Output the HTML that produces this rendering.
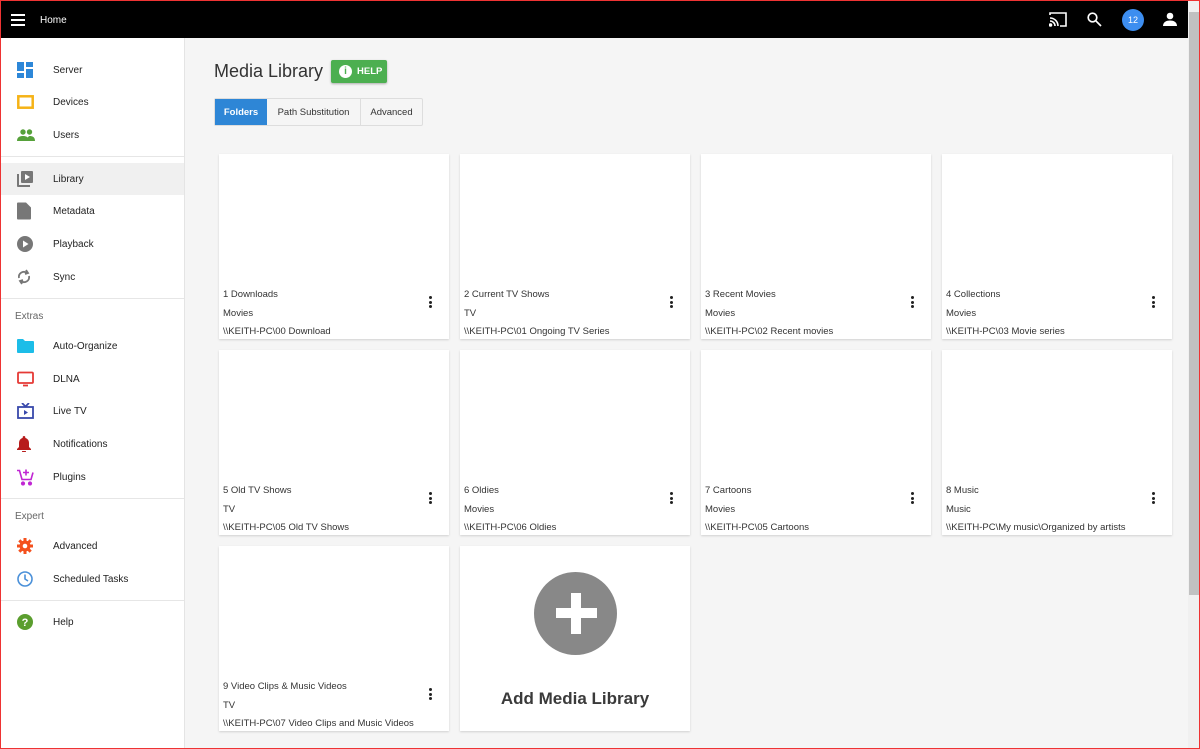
<!DOCTYPE html>
<html><head><meta charset="utf-8"><style>
*{box-sizing:border-box;margin:0;padding:0}
body{width:1200px;height:749px;overflow:hidden;font-family:"Liberation Sans",sans-serif;background:#f5f5f5;position:relative}
.frame{position:absolute;inset:0;border:1px solid #e33;pointer-events:none;z-index:10}
.top{position:absolute;left:0;top:0;width:1188px;height:38px;background:#000;color:#fff}
.side{position:absolute;left:0;top:38px;width:185px;height:711px;background:#fff;border-right:1px solid #e4e4e4}
.it{position:absolute;left:0;width:184px;height:32px;font-size:10px;color:#222;}
.it span{position:absolute;left:53px;top:50%;transform:translateY(-45%)}
.it svg{position:absolute;left:17px;top:50%;transform:translateY(-50%)}
.hd{position:absolute;left:15px;font-size:10px;color:#666}
.dv{position:absolute;left:0;width:184px;border-top:1px solid #e6e6e6}
.card{position:absolute;width:230px;height:185px;background:#fff;box-shadow:0 1px 2px rgba(0,0,0,.15)}
.card p{position:absolute;left:4px;font-size:9.5px;color:#333;white-space:nowrap}
.dots{position:absolute;left:210px;top:142px;width:4px}
.dots i{display:block;width:3px;height:3px;border-radius:50%;background:#222;margin-bottom:1.5px}
.sb{position:absolute;left:1188px;top:0;width:12px;height:749px;background:#f0f0f0}
</style></head><body>
<div class="top">
<div style="position:absolute;left:11px;top:14px;width:14px"><div style="height:2px;background:#fff;margin-bottom:3px"></div><div style="height:2px;background:#fff;margin-bottom:3px"></div><div style="height:2px;background:#fff"></div></div>
<div style="position:absolute;left:40px;top:15px;font-size:10px">Home</div>
<svg style="position:absolute;left:1049px;top:12px" width="18" height="15" viewBox="0 0 18 15" fill="none" stroke="#fff" stroke-width="1.6"><path d="M1 3V1h16v13h-6"/><path d="M1 6a8 8 0 0 1 8 8M1 9a5 5 0 0 1 5 5"/><circle cx="1.5" cy="13" r="1" fill="#fff"/></svg>
<svg style="position:absolute;left:1087px;top:12px" width="15" height="15" viewBox="0 0 15 15" fill="none" stroke="#fff" stroke-width="1.7"><circle cx="5.5" cy="5.5" r="4.3"/><path d="M8.7 8.7L14 14"/></svg>
<div style="position:absolute;left:1122px;top:9px;width:22px;height:22px;border-radius:50%;background:#3d8ef0;font-size:9px;text-align:center;line-height:22px">12</div>
<svg style="position:absolute;left:1163px;top:12px" width="14" height="14" viewBox="0 0 14 14" fill="#fff"><circle cx="7" cy="4" r="3.3"/><path d="M0 14c0-4 3.5-5.5 7-5.5s7 1.5 7 5.5z"/></svg>
</div>
<div class="side">
<div class="it" style="top:16px"><svg width="16" height="16" viewBox="0 0 16 16" fill="#2d87d8"><rect x="0" y="0" width="7" height="9"/><rect x="9" y="0" width="7" height="5"/><rect x="0" y="11" width="7" height="5"/><rect x="9" y="7" width="7" height="9"/></svg><span>Server</span></div>
<div class="it" style="top:48px"><svg width="17" height="14" viewBox="0 0 17 14" fill="none" stroke="#f5b317" stroke-width="2.5"><rect x="1.3" y="1.3" width="14.4" height="11.4"/></svg><span>Devices</span></div>
<div class="it" style="top:81px"><svg width="18" height="12" viewBox="0 0 18 12" fill="#56a13a"><circle cx="6" cy="3" r="2.7"/><circle cx="12.5" cy="3" r="2.7"/><path d="M0 12c0-4 3-5 6-5s6 1 6 5zM10 12c0-3 1-4.5 2.5-5 3 0 5.5 1 5.5 5z"/></svg><span>Users</span></div>
<div class="dv" style="top:118px"></div>
<div class="it" style="top:125px;background:#f0f0f0"><svg width="16" height="16" viewBox="0 0 16 16" fill="#777"><path d="M0 3h2v11h11v2H1a1 1 0 0 1-1-1z"/><rect x="4" y="0" width="12" height="12" rx="1"/><path d="M8 3v6l5-3z" fill="#fff"/></svg><span>Library</span></div>
<div class="it" style="top:157px"><svg width="14" height="17" viewBox="0 0 14 17" fill="#777"><path d="M1 0h8l5 5v11a1 1 0 0 1-1 1H1a1 1 0 0 1-1-1V1a1 1 0 0 1 1-1z"/></svg><span>Metadata</span></div>
<div class="it" style="top:190px"><svg width="16" height="16" viewBox="0 0 16 16"><circle cx="8" cy="8" r="8" fill="#777"/><path d="M6 4.5v7l5.5-3.5z" fill="#fff"/></svg><span>Playback</span></div>
<div class="it" style="top:223px"><svg width="14" height="16" viewBox="0 0 14 16" fill="none" stroke="#777" stroke-width="1.8"><path d="M2 9a5 5 0 0 1 8-5M12 7a5 5 0 0 1-8 5"/><path d="M9 1l2 3-3 1M5 15l-2-3 3-1"/></svg><span>Sync</span></div>
<div class="dv" style="top:260px"></div>
<div class="hd" style="top:273px">Extras</div>
<div class="it" style="top:292px"><svg width="17" height="14" viewBox="0 0 17 14" fill="#1cbde8"><path d="M0 1a1 1 0 0 1 1-1h5l2 2h8a1 1 0 0 1 1 1v10a1 1 0 0 1-1 1H1a1 1 0 0 1-1-1z"/></svg><span>Auto-Organize</span></div>
<div class="it" style="top:325px"><svg width="17" height="15" viewBox="0 0 17 15" fill="none" stroke="#e53935" stroke-width="1.8"><rect x="1" y="1" width="15" height="10.5" rx="1"/><path d="M6 14h5"/></svg><span>DLNA</span></div>
<div class="it" style="top:357px"><svg width="17" height="16" viewBox="0 0 17 16" fill="none" stroke="#3949ab" stroke-width="1.8"><rect x="1" y="4" width="15" height="11"/><path d="M5 0l3.5 3.5L12 0"/><path d="M7 7v5l4-2.5z" fill="#3949ab" stroke="none"/></svg><span>Live TV</span></div>
<div class="it" style="top:390px"><svg width="14" height="16" viewBox="0 0 14 16" fill="#b71c1c"><path d="M7 0a1.3 1.3 0 0 1 1.3 1.3v.6A5 5 0 0 1 12 7v4l2 2v1H0v-1l2-2V7a5 5 0 0 1 3.7-5.1v-.6A1.3 1.3 0 0 1 7 0zM5 15h4a2 2 0 0 1-4 0z"/></svg><span>Notifications</span></div>
<div class="it" style="top:423px"><svg width="17" height="17" viewBox="0 0 17 17" fill="none" stroke="#c026d3" stroke-width="1.6"><path d="M0 2h2.5l2.5 9h9l2-7"/><path d="M9 1v6M6 4h6"/><circle cx="6" cy="15" r="1.3" fill="#c026d3"/><circle cx="13" cy="15" r="1.3" fill="#c026d3"/></svg><span>Plugins</span></div>
<div class="dv" style="top:460px"></div>
<div class="hd" style="top:473px">Expert</div>
<div class="it" style="top:492px"><svg width="16" height="16" viewBox="0 0 16 16"><g fill="#f4511e"><circle cx="8" cy="8" r="5.5"/><g stroke="#f4511e" stroke-width="3"><path d="M8 0v16M0 8h16M2.3 2.3l11.4 11.4M13.7 2.3L2.3 13.7"/></g></g><circle cx="8" cy="8" r="2.3" fill="#fff"/></svg><span>Advanced</span></div>
<div class="it" style="top:525px"><svg width="16" height="16" viewBox="0 0 16 16" fill="none" stroke="#4a90d9" stroke-width="1.6"><circle cx="8" cy="8" r="7"/><path d="M8 3.5V8l3 2"/></svg><span>Scheduled Tasks</span></div>
<div class="dv" style="top:562px"></div>
<div class="it" style="top:568px"><svg width="16" height="16" viewBox="0 0 16 16"><circle cx="8" cy="8" r="8" fill="#5b9e2e"/><text x="8" y="12" font-size="11" font-weight="bold" fill="#fff" text-anchor="middle" font-family="Liberation Sans">?</text></svg><span>Help</span></div>
</div>
<div style="position:absolute;left:214px;top:61px;font-size:18px;color:#333">Media Library</div>
<div style="position:absolute;left:331px;top:60px;width:56px;height:23px;background:#4caf50;border-radius:2px;box-shadow:0 1px 2px rgba(0,0,0,.3);color:#fff;font-size:9.5px;font-weight:bold">
<div style="position:absolute;left:8px;top:5px;width:13px;height:13px;border-radius:50%;background:#fff;color:#4caf50;font-size:10px;text-align:center;line-height:13px">i</div>
<span style="position:absolute;left:26px;top:6px">HELP</span></div>
<div style="position:absolute;left:214px;top:98px;height:28px;display:flex;font-size:9.5px;border:1px solid #ddd;border-radius:2px;background:#f5f5f5">
<div style="width:52px;background:#2e86d6;color:#fff;text-align:center;line-height:27px;font-weight:bold">Folders</div>
<div style="width:94px;text-align:center;line-height:27px;color:#333;border-right:1px solid #ddd">Path Substitution</div>
<div style="width:61px;text-align:center;line-height:27px;color:#333">Advanced</div></div>

<div class="card" style="left:219px;top:154px"><p style="top:135px">1 Downloads</p><p style="top:154px">Movies</p><p style="top:172px">\\KEITH-PC\00 Download</p><div class="dots"><i></i><i></i><i></i></div></div>
<div class="card" style="left:460px;top:154px"><p style="top:135px">2 Current TV Shows</p><p style="top:154px">TV</p><p style="top:172px">\\KEITH-PC\01 Ongoing TV Series</p><div class="dots"><i></i><i></i><i></i></div></div>
<div class="card" style="left:701px;top:154px"><p style="top:135px">3 Recent Movies</p><p style="top:154px">Movies</p><p style="top:172px">\\KEITH-PC\02 Recent movies</p><div class="dots"><i></i><i></i><i></i></div></div>
<div class="card" style="left:942px;top:154px"><p style="top:135px">4 Collections</p><p style="top:154px">Movies</p><p style="top:172px">\\KEITH-PC\03 Movie series</p><div class="dots"><i></i><i></i><i></i></div></div>
<div class="card" style="left:219px;top:350px"><p style="top:135px">5 Old TV Shows</p><p style="top:154px">TV</p><p style="top:172px">\\KEITH-PC\05 Old TV Shows</p><div class="dots"><i></i><i></i><i></i></div></div>
<div class="card" style="left:460px;top:350px"><p style="top:135px">6 Oldies</p><p style="top:154px">Movies</p><p style="top:172px">\\KEITH-PC\06 Oldies</p><div class="dots"><i></i><i></i><i></i></div></div>
<div class="card" style="left:701px;top:350px"><p style="top:135px">7 Cartoons</p><p style="top:154px">Movies</p><p style="top:172px">\\KEITH-PC\05 Cartoons</p><div class="dots"><i></i><i></i><i></i></div></div>
<div class="card" style="left:942px;top:350px"><p style="top:135px">8 Music</p><p style="top:154px">Music</p><p style="top:172px">\\KEITH-PC\My music\Organized by artists</p><div class="dots"><i></i><i></i><i></i></div></div>
<div class="card" style="left:219px;top:546px"><p style="top:135px">9 Video Clips &amp; Music Videos</p><p style="top:154px">TV</p><p style="top:172px">\\KEITH-PC\07 Video Clips and Music Videos</p><div class="dots"><i></i><i></i><i></i></div></div>
<div class="card" style="left:460px;top:546px">
<div style="position:absolute;left:74px;top:26px;width:83px;height:83px;border-radius:50%;background:#888"></div>
<div style="position:absolute;left:96px;top:62px;width:41px;height:10px;background:#fff"></div>
<div style="position:absolute;left:111px;top:47px;width:10px;height:41px;background:#fff"></div>
<div style="position:absolute;left:0;width:230px;top:143px;text-align:center;font-size:17px;font-weight:bold;color:#3a3a3a">Add Media Library</div></div>

<div class="sb"><div style="position:absolute;left:1px;top:12px;width:10px;height:583px;background:#c1c1c1"></div></div>
<div class="frame"></div>
</body></html>
